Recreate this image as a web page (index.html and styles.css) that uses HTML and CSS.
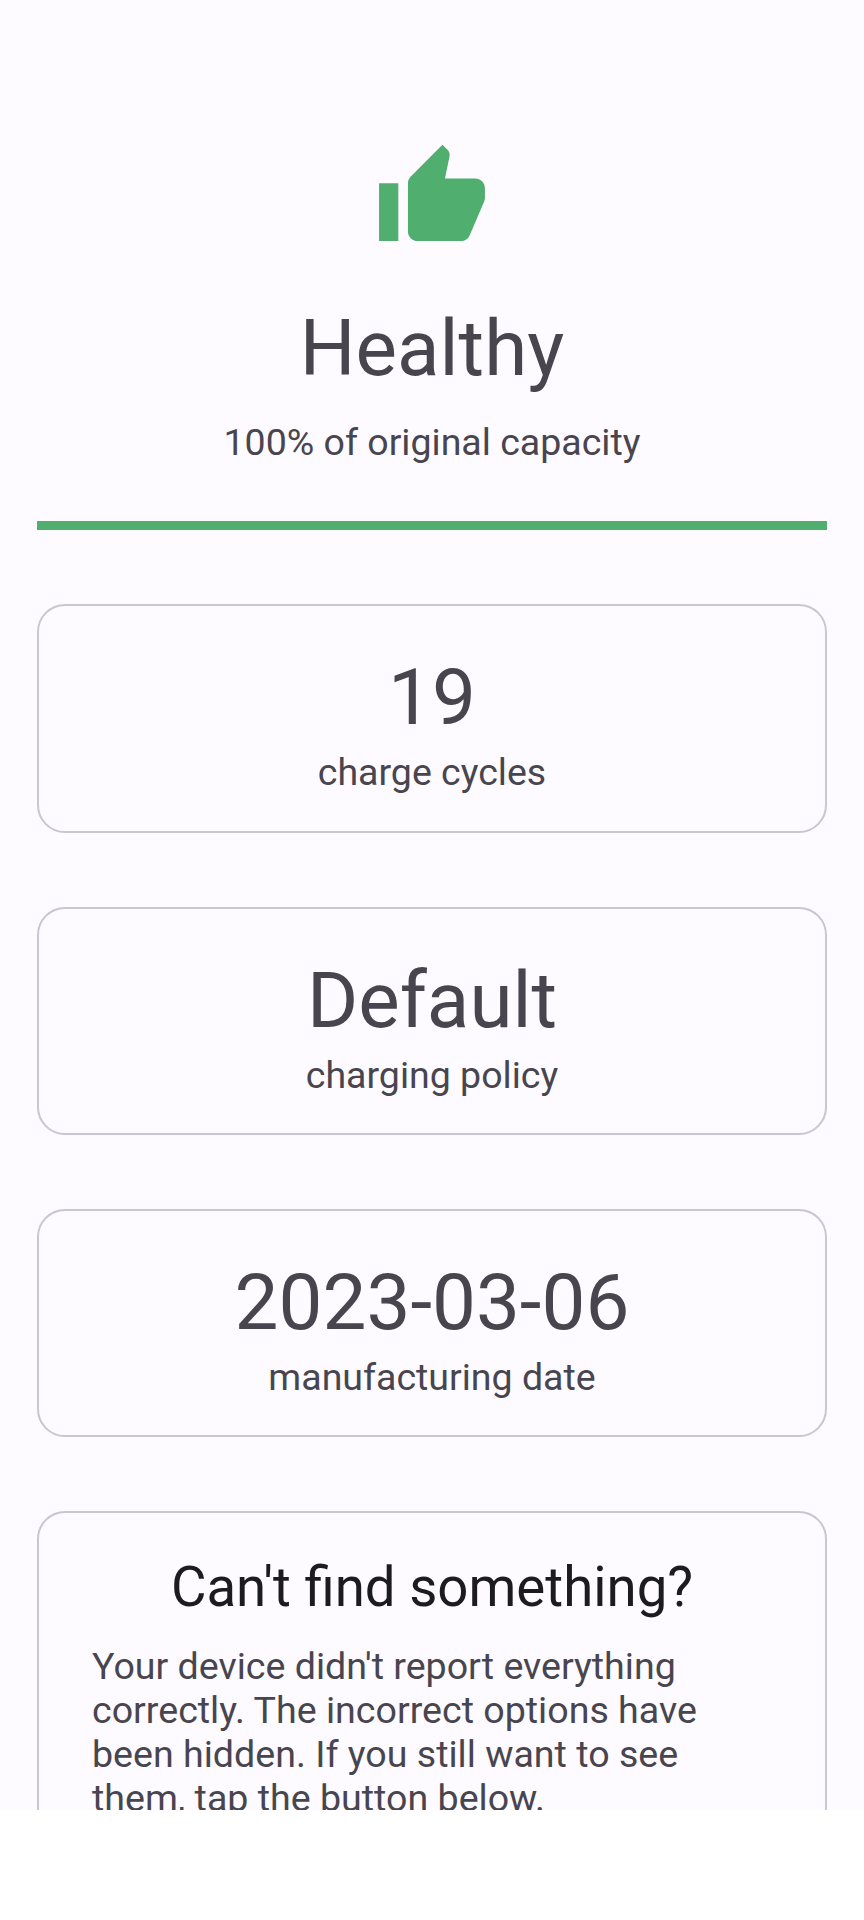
FILE: index.html
```html
<!DOCTYPE html>
<html lang="en">

<head>
    <meta charset="UTF-8" />
    <meta name="viewport" content="width=device-width, initial-scale=1.0" />
    <title>Battery health</title>
    <link rel="stylesheet" href="styles.css">
</head>

<body>
    <main class="screen">
        <div class="health">
            <svg class="thumb" viewBox="0 0 24 24">
                <path d="M1 21h4V9H1v12zm22-11c0-1.1-.9-2-2-2h-6.31l.95-4.57.03-.32c0-.41-.17-.79-.44-1.06L14.17 1 7.59 7.59C7.22 7.95 7 8.45 7 9v10c0 1.1.9 2 2 2h9c.83 0 1.54-.5 1.84-1.22l3.02-7.05c.09-.23.14-.47.14-.73v-2z" />
            </svg>
            <h1 class="value">Healthy</h1>
            <p class="caption">100% of original capacity</p>
        </div>

        <div class="bar"></div>

        <div class="card">
            <div class="value">19</div>
            <div class="caption">charge cycles</div>
        </div>

        <div class="card">
            <div class="value">Default</div>
            <div class="caption">charging policy</div>
        </div>

        <div class="card">
            <div class="value">2023-03-06</div>
            <div class="caption">manufacturing date</div>
        </div>

        <div class="card help">
            <h2>Can't find something?</h2>
            <p>Your device didn't report everything correctly. The incorrect options have been hidden. If you still want to see them, tap the button below.</p>
        </div>
    </main>
</body>

</html>
```
FILE: styles.css
```css
* {
    box-sizing: border-box;
}

body {
    margin: 0;
    background: #ffffff;
    font-family: Roboto, sans-serif;
    color: #49454f;
}

h1,
h2,
p {
    margin: 0;
    font-weight: 400;
}

.screen {
    height: 1810px;
    padding: 139.5px 37px 0;
    overflow: hidden;
    background: #fdfbff;
}

.health {
    display: flex;
    flex-direction: column;
    align-items: center;
}

.thumb {
    width: 116px;
    height: 115.5px;
    fill: #50ae6e;
}

.health .value {
    margin-top: 46.5px;
}

.health .caption {
    margin-top: 26px;
}

.value {
    font-size: 78.2px;
    line-height: 92px;
}

.caption {
    margin-top: 7px;
    font-size: 37.5px;
    line-height: 44px;
}

.bar {
    height: 9.6px;
    margin-top: 57.2px;
    background: #50ae6e;
}

.card {
    height: 228.3px;
    margin-top: 74px;
    padding-top: 45px;
    border: 2px solid #cac5d0;
    border-radius: 28px;
    text-align: center;
}

.help {
    height: 480px;
    padding: 42px 53px 0;
}

.help h2 {
    font-size: 54.6px;
    line-height: 64px;
    color: #1c1b1f;
}

.help p {
    margin-top: 25px;
    font-size: 37.6px;
    line-height: 44px;
    text-align: left;
}
```
